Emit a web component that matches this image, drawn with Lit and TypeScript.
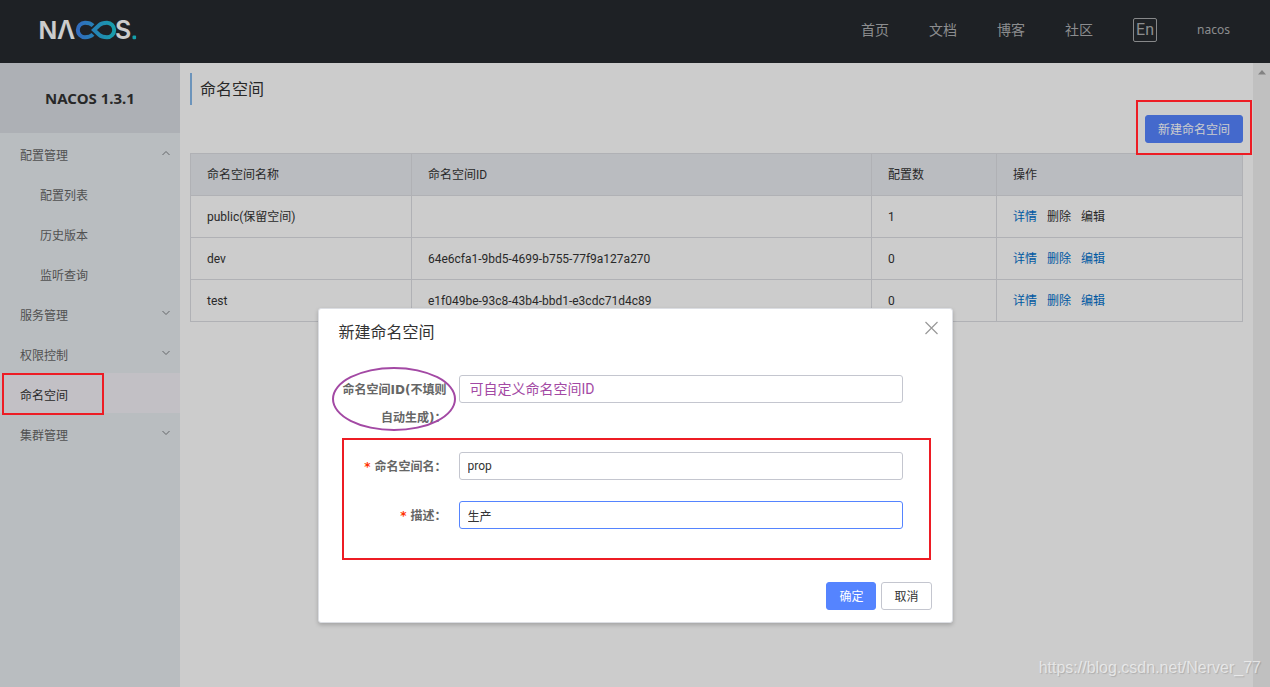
import { LitElement, html, css, svg, nothing } from "lit";
import { customElement, property, state } from "lit/decorators.js";
import { classMap } from "lit/directives/class-map.js";

interface MenuEntry {
  label: string;
  arrow?: "up" | "down";
  child?: boolean;
  current?: boolean;
}

interface Namespace {
  name: string;
  id: string;
  count: number;
  reserved?: boolean;
}

const MENU: MenuEntry[] = [
  { label: "配置管理", arrow: "up" },
  { label: "配置列表", child: true },
  { label: "历史版本", child: true },
  { label: "监听查询", child: true },
  { label: "服务管理", arrow: "down" },
  { label: "权限控制", arrow: "down" },
  { label: "命名空间", current: true },
  { label: "集群管理", arrow: "down" },
];

const NAMESPACES: Namespace[] = [
  { name: "public(保留空间)", id: "", count: 1, reserved: true },
  { name: "dev", id: "64e6cfa1-9bd5-4699-b755-77f9a127a270", count: 0 },
  { name: "test", id: "e1f049be-93c8-43b4-bbd1-e3cdc71d4c89", count: 0 },
];

const base = css`
  *,
  *::before,
  *::after {
    box-sizing: border-box;
  }
  a {
    color: inherit;
    text-decoration: none;
  }
  button,
  input {
    font: inherit;
    margin: 0;
  }
`;

@customElement("nacos-header")
export class NacosHeader extends LitElement {
  static styles = [
    base,
    css`
      :host {
        display: block;
      }
      .bar {
        display: flex;
        align-items: center;
        justify-content: space-between;
        height: 63px;
        padding: 0 40px 4px 38px;
        background: #262a2f;
        color: #b0b1b3;
      }
      .logo {
        display: block;
      }
      .word {
        font: bold 26px "Liberation Sans", Arial, sans-serif;
        fill: #ffffff;
      }
      .word.wide {
        font: 600 25px Inter, sans-serif;
      }
      .links {
        display: flex;
        align-items: center;
        gap: 40px;
        font-size: 14px;
        line-height: 24px;
      }
      .lang {
        width: 24px;
        height: 24px;
        padding: 0;
        border: 1px solid #a9abad;
        border-radius: 2px;
        background: none;
        color: inherit;
        font-size: 16px;
        line-height: 20px;
      }
      .user {
        font-family: "Noto Sans", sans-serif;
        font-size: 12px;
      }
    `,
  ];

  render() {
    return html`
      <header class="bar">
        <a class="logo" href="#" aria-label="Nacos">
          <svg class="logo" width="100" height="34" viewBox="0 0 100 34">
            <defs>
              <linearGradient id="loop" gradientUnits="userSpaceOnUse" x1="38" y1="0" x2="78" y2="0">
                <stop offset="0" stop-color="#3f83ee" />
                <stop offset="1" stop-color="#1cc8d6" />
              </linearGradient>
            </defs>
            <text class="word" x="0.5" y="26">N</text>
            <text class="word wide" x="19" y="26">Λ</text>
            <text class="word wide" x="77" y="26">S</text>
            <g fill="none" stroke="url(#loop)" stroke-width="4">
              <path d="M55 12.6 C53 10.6 50.4 9.8 47 9.8 A7.2 7.2 0 0 0 47 24.2 C50.4 24.2 53 23.4 55 21.4" />
              <path d="M56 17 L61.4 12 C63.2 10.4 65.4 9.8 69 9.8 A7.2 7.2 0 0 1 69 24.2 C65.4 24.2 63.2 23.6 61.4 22 Z" />
            </g>
            <rect x="94.5" y="22.6" width="3.6" height="3.6" rx="1" fill="#1cc8d6" />
          </svg>
        </a>
        <nav class="links">
          <a href="#">首页</a>
          <a href="#">文档</a>
          <a href="#">博客</a>
          <a href="#">社区</a>
          <button class="lang" type="button">En</button>
          <a class="user" href="#">nacos</a>
        </nav>
      </header>
    `;
  }
}

@customElement("nacos-chevron")
export class NacosChevron extends LitElement {
  @property() direction: "up" | "down" = "down";

  static styles = css`
    :host {
      display: block;
      line-height: 0;
    }
  `;

  render() {
    const d = this.direction === "up" ? "M0.5 5 L4 1.5 L7.5 5" : "M0.5 1 L4 4.5 L7.5 1";
    return html`<svg width="8" height="6" viewBox="0 0 8 6">
      ${svg`<path d=${d} fill="none" stroke="#7d8084" stroke-width="1" />`}
    </svg>`;
  }
}

@customElement("app-root")
export class AppRoot extends LitElement {
  @state() private open = true;

  static styles = [
    base,
    css`
      :host {
        display: flex;
        flex-direction: column;
        position: relative;
        height: 100vh;
        overflow: hidden;
        background: #ffffff;
        color: #333333;
        font-family: Roboto, "Noto Sans CJK SC", sans-serif;
        font-size: 12px;
        line-height: 20px;
      }
      .body {
        flex: 1;
        display: flex;
        min-height: 0;
      }

      .side {
        flex: none;
        width: 180px;
        background: #e8edf1;
      }
      .version {
        margin: 0;
        background: #d9dde3;
        color: #333333;
        font-family: "Noto Sans", sans-serif;
        font-size: 15px;
        line-height: 70px;
        text-align: center;
      }
      .menu {
        margin: 0;
        padding: 0;
        list-style: none;
      }
      .entry {
        position: relative;
      }
      .link {
        display: flex;
        align-items: center;
        justify-content: space-between;
        height: 40px;
        padding: 6px 10px 0 20px;
        color: #666666;
      }
      .link nacos-chevron {
        margin-bottom: 6px;
      }
      .child .link {
        padding-left: 40px;
      }
      .current .link {
        background: #f3f1f7;
        color: #333333;
      }

      .main {
        flex: 1;
        min-width: 0;
        padding: 10px;
      }
      .title {
        margin: 0 0 10px;
        padding: 2px 0 0 8px;
        border-left: 2px solid #87b9ea;
        font-size: 16px;
        font-weight: 400;
        line-height: 30px;
      }
      .actions {
        display: flex;
        justify-content: flex-end;
        margin-bottom: 10px;
      }
      .anchor {
        position: relative;
      }
      .btn {
        display: block;
        height: 28px;
        padding: 1px 12px 0;
        border: 1px solid #c4c6cf;
        border-radius: 3px;
        background: #ffffff;
        color: #333333;
        line-height: 26px;
      }
      .btn.primary {
        border-color: #5584ff;
        background: #5584ff;
        color: #ffffff;
      }

      .table {
        width: 100%;
        border-collapse: collapse;
        table-layout: fixed;
      }
      .table th,
      .table td {
        height: 42px;
        padding: 0 16px;
        border: 1px solid #dcdee3;
        font-weight: 400;
        text-align: left;
      }
      .table th {
        background: #e9ebf0;
      }
      .c-name {
        width: 21%;
      }
      .c-count {
        width: 125px;
      }
      .c-ops {
        width: 246px;
      }
      .ops {
        display: flex;
        gap: 10px;
        color: #0070cc;
      }
      .off {
        color: #333333;
      }

      .scroll {
        flex: none;
        display: flex;
        justify-content: center;
        width: 17px;
        padding-top: 7px;
        background: #f1f1f1;
      }

      .backdrop {
        position: absolute;
        inset: 0;
        z-index: 10;
        background: rgba(0, 0, 0, 0.2);
      }
      .dialog {
        position: absolute;
        z-index: 20;
        bottom: 64px;
        left: 0;
        right: 0;
        width: 50%;
        margin: 0 auto;
        border: 1px solid #dcdee3;
        border-radius: 3px;
        background: #ffffff;
        box-shadow: 0 2px 4px rgba(0, 0, 0, 0.2);
      }
      .head {
        display: flex;
        align-items: flex-start;
        justify-content: space-between;
        padding: 12px 14px 0 20px;
      }
      .head h2 {
        margin: 0;
        font-size: 16px;
        font-weight: 400;
        line-height: 24px;
      }
      .close {
        display: block;
        padding: 0;
        border: 0;
        background: none;
        line-height: 0;
      }
      .form {
        padding: 30px 49px 0 19px;
      }
      .row {
        display: grid;
        grid-template-columns: 109px 1fr;
        column-gap: 12px;
        align-items: start;
        margin-bottom: 20px;
      }
      .label {
        position: relative;
        padding-top: 1px;
        color: #666666;
        font-family: "DejaVu Sans", "Noto Sans CJK SC", sans-serif;
        font-weight: 700;
        line-height: 28px;
        text-align: right;
      }
      .req {
        margin-right: 4px;
        color: #ff3000;
      }
      .field {
        width: 100%;
        height: 28px;
        padding: 0 8px;
        border: 1px solid #c4c6cf;
        border-radius: 3px;
        outline: none;
        background: #ffffff;
        color: #333333;
      }
      .field.active {
        border-color: #5584ff;
      }
      .field.note {
        padding: 0 10px 2px;
        color: #a349a4;
        font-size: 14px;
      }
      .group {
        position: relative;
      }
      .foot {
        display: flex;
        justify-content: flex-end;
        gap: 5px;
        padding: 32px 20px 12px;
      }

      .mark {
        position: absolute;
        z-index: 30;
        border: 2px solid #ed1c24;
        pointer-events: none;
      }
      .mark.nav {
        inset: 0 76px -2px 2px;
      }
      .mark.create {
        inset: -15px -9px -12px;
      }
      .mark.required {
        inset: -14px -28px -30px 4px;
      }
      .mark.oval {
        inset: -8px -9px 1px -6px;
        border-color: #a349a4;
        border-radius: 50%;
      }
      .watermark {
        position: absolute;
        z-index: 40;
        right: 9px;
        bottom: 9px;
        color: rgba(255, 255, 255, 0.6);
        font-family: "Liberation Sans", Arial, sans-serif;
        font-size: 16px;
        text-shadow: 1px 1px 1px rgba(0, 0, 0, 0.15);
      }
    `,
  ];

  private close() {
    this.open = false;
  }

  private show() {
    this.open = true;
  }

  private renderEntry(e: MenuEntry) {
    return html`
      <li class="entry ${classMap({ child: !!e.child, current: !!e.current })}">
        <a class="link" href="#">
          ${e.label}
          ${e.arrow ? html`<nacos-chevron direction=${e.arrow}></nacos-chevron>` : nothing}
        </a>
        ${e.current ? html`<span class="mark nav"></span>` : nothing}
      </li>
    `;
  }

  private renderRow(n: Namespace) {
    const off = classMap({ off: !!n.reserved });
    return html`
      <tr>
        <td>${n.name}</td>
        <td>${n.id}</td>
        <td>${n.count}</td>
        <td>
          <div class="ops">
            <a href="#">详情</a>
            <a href="#" class=${off}>删除</a>
            <a href="#" class=${off}>编辑</a>
          </div>
        </td>
      </tr>
    `;
  }

  private renderDialog() {
    return html`
      <div class="backdrop"></div>
      <div class="dialog" role="dialog" aria-labelledby="dialog-title">
        <div class="head">
          <h2 id="dialog-title">新建命名空间</h2>
          <button class="close" type="button" aria-label="关闭" @click=${this.close}>
            <svg width="13" height="14" viewBox="0 0 13 14">
              <path d="M0.5 1 L12.5 13 M12.5 1 L0.5 13" fill="none" stroke="#999999" stroke-width="1.2" />
            </svg>
          </button>
        </div>
        <form class="form">
          <div class="row">
            <label class="label" for="ns-id">
              命名空间ID(不填则自动生成)：<span class="mark oval"></span>
            </label>
            <input class="field note" id="ns-id" type="text" value="可自定义命名空间ID" />
          </div>
          <div class="group">
            <div class="row">
              <label class="label" for="ns-name"><span class="req">*</span>命名空间名：</label>
              <input class="field" id="ns-name" type="text" value="prop" />
            </div>
            <div class="row">
              <label class="label" for="ns-desc"><span class="req">*</span>描述：</label>
              <input class="field active" id="ns-desc" type="text" value="生产" />
            </div>
            <span class="mark required"></span>
          </div>
        </form>
        <div class="foot">
          <button class="btn primary" type="button">确定</button>
          <button class="btn" type="button" @click=${this.close}>取消</button>
        </div>
      </div>
    `;
  }

  render() {
    return html`
      <nacos-header></nacos-header>
      <div class="body">
        <aside class="side">
          <h1 class="version">NACOS 1.3.1</h1>
          <ul class="menu">
            ${MENU.map((e) => this.renderEntry(e))}
          </ul>
        </aside>
        <main class="main">
          <h2 class="title">命名空间</h2>
          <div class="actions">
            <div class="anchor">
              <button class="btn primary" type="button" @click=${this.show}>新建命名空间</button>
              <span class="mark create"></span>
            </div>
          </div>
          <table class="table">
            <thead>
              <tr>
                <th class="c-name">命名空间名称</th>
                <th>命名空间ID</th>
                <th class="c-count">配置数</th>
                <th class="c-ops">操作</th>
              </tr>
            </thead>
            <tbody>
              ${NAMESPACES.map((n) => this.renderRow(n))}
            </tbody>
          </table>
        </main>
        <div class="scroll">
          <svg width="8" height="5" viewBox="0 0 8 5"><path d="M4 0 L8 4.5 H0 Z" fill="#a3a3a3" /></svg>
        </div>
      </div>
      ${this.open ? this.renderDialog() : nothing}
      <div class="watermark">https://blog.csdn.net/Nerver_77</div>
    `;
  }
}
